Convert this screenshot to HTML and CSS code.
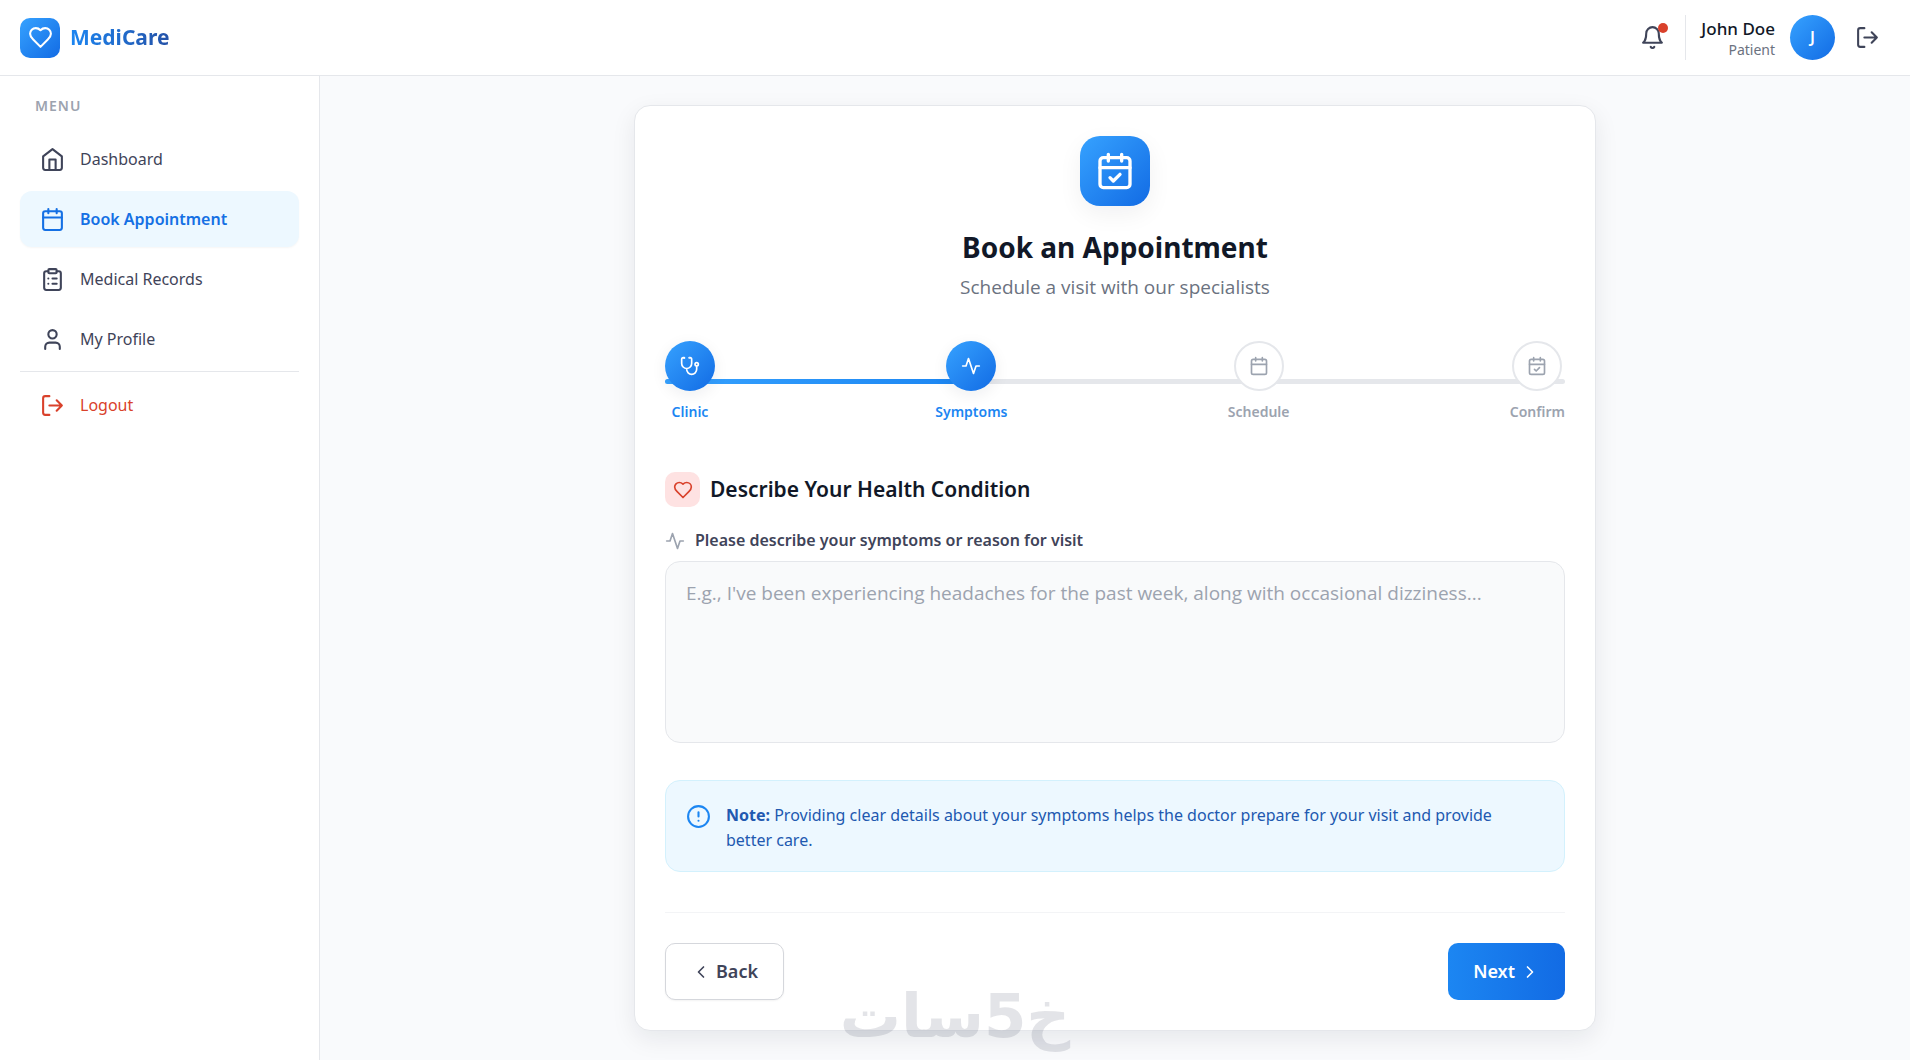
FILE: index.html
```html
<!DOCTYPE html>
<html lang="en">
<head>
<meta charset="utf-8">
<meta name="viewport" content="width=device-width, initial-scale=1">
<title>MediCare - Book an Appointment</title>
<link rel="stylesheet" href="styles.css">
</head>
<body>
<svg class="sprite" aria-hidden="true">
  <symbol id="heart" viewBox="0 0 24 24"><path d="M19 14c1.49-1.46 3-3.21 3-5.5A5.5 5.5 0 0 0 16.500 3c-1.760 0-3 .5-4.500 2-1.500-1.500-2.740-2-4.500-2A5.500 5.500 0 0 0 2 8.500c0 2.300 1.500 4.050 3 5.500l7 7Z"/></symbol>
  <symbol id="bell" viewBox="0 0 24 24"><path d="M6 8a6 6 0 0 1 12 0c0 7 3 9 3 9H3s3-2 3-9"/><path d="M10.300 21a1.940 1.940 0 0 0 3.400 0"/></symbol>
  <symbol id="logout" viewBox="0 0 24 24"><path d="M9 21H5a2 2 0 0 1-2-2V5a2 2 0 0 1 2-2h4M16 17l5-5-5-5M21 12H9"/></symbol>
  <symbol id="home" viewBox="0 0 24 24"><path d="m3 9 9-7 9 7v11a2 2 0 0 1-2 2H5a2 2 0 0 1-2-2zM9 22V12h6v10"/></symbol>
  <symbol id="calendar" viewBox="0 0 24 24"><rect x="3" y="4" width="18" height="18" rx="2"/><path d="M16 2v4M8 2v4M3 10h18"/></symbol>
  <symbol id="calendar-check" viewBox="0 0 24 24"><rect x="3" y="4" width="18" height="18" rx="2"/><path d="M16 2v4M8 2v4M3 10h18M9 16l2 2 4-4"/></symbol>
  <symbol id="clipboard" viewBox="0 0 24 24"><rect x="8" y="2" width="8" height="4" rx="1"/><path d="M16 4h2a2 2 0 0 1 2 2v14a2 2 0 0 1-2 2H6a2 2 0 0 1-2-2V6a2 2 0 0 1 2-2h2M12 11h4M12 16h4M8 11h.01M8 16h.01"/></symbol>
  <symbol id="user" viewBox="0 0 24 24"><path d="M19 21v-2a4 4 0 0 0-4-4H9a4 4 0 0 0-4 4v2"/><circle cx="12" cy="7" r="4"/></symbol>
  <symbol id="stethoscope" viewBox="0 0 24 24"><path d="M4.800 2.300A.3.3 0 1 0 5 2H4a2 2 0 0 0-2 2v5a6 6 0 0 0 12 0V4a2 2 0 0 0-2-2h-1a.2.2 0 1 0 .3.3M8 15v1a6 6 0 0 0 12 0v-4"/><circle cx="20" cy="10" r="2"/></symbol>
  <symbol id="activity" viewBox="0 0 24 24"><path d="M22 12h-4l-3 9L9 3l-3 9H2"/></symbol>
  <symbol id="alert" viewBox="0 0 24 24"><circle cx="12" cy="12" r="10"/><path d="M12 8v4M12 16h.01"/></symbol>
  <symbol id="left" viewBox="0 0 24 24"><path d="m15 18-6-6 6-6"/></symbol>
  <symbol id="right" viewBox="0 0 24 24"><path d="m9 18 6-6-6-6"/></symbol>
</svg>

<header class="topbar">
  <a class="brand" href="#">
    <span class="brand-mark"><svg class="icon"><use href="#heart"/></svg></span>
    <span class="brand-name">MediCare</span>
  </a>
  <div class="account">
    <button class="icon-button" type="button" aria-label="Notifications">
      <svg class="icon"><use href="#bell"/></svg>
      <span class="badge"></span>
    </button>
    <div class="profile">
      <div class="profile-text">
        <div class="profile-name">John Doe</div>
        <div class="profile-role">Patient</div>
      </div>
      <div class="avatar">J</div>
    </div>
    <button class="icon-button" type="button" aria-label="Log out"><svg class="icon"><use href="#logout"/></svg></button>
  </div>
</header>

<div class="layout">
  <aside class="sidebar">
    <h2 class="menu-title">MENU</h2>
    <nav class="nav">
      <a class="nav-item" href="#"><svg class="icon"><use href="#home"/></svg>Dashboard</a>
      <a class="nav-item active" href="#" aria-current="page"><svg class="icon"><use href="#calendar"/></svg>Book Appointment</a>
      <a class="nav-item" href="#"><svg class="icon"><use href="#clipboard"/></svg>Medical Records</a>
      <a class="nav-item" href="#"><svg class="icon"><use href="#user"/></svg>My Profile</a>
    </nav>
    <div class="nav-footer">
      <a class="nav-item danger" href="#"><svg class="icon"><use href="#logout"/></svg>Logout</a>
    </div>
  </aside>

  <main class="main">
    <form class="card">
      <div class="card-header">
        <span class="hero-mark"><svg class="icon"><use href="#calendar-check"/></svg></span>
        <h1 class="title">Book an Appointment</h1>
        <p class="subtitle">Schedule a visit with our specialists</p>
      </div>

      <div class="stepper">
        <div class="track"><div class="track-fill"></div></div>
        <ol class="steps">
          <li class="step done"><span class="step-dot"><svg class="icon small"><use href="#stethoscope"/></svg></span>Clinic</li>
          <li class="step done" aria-current="step"><span class="step-dot"><svg class="icon small"><use href="#activity"/></svg></span>Symptoms</li>
          <li class="step"><span class="step-dot"><svg class="icon small"><use href="#calendar"/></svg></span>Schedule</li>
          <li class="step"><span class="step-dot"><svg class="icon small"><use href="#calendar-check"/></svg></span>Confirm</li>
        </ol>
      </div>

      <h2 class="section-title"><span class="section-mark"><svg class="icon small"><use href="#heart"/></svg></span>Describe Your Health Condition</h2>
      <label class="field-label" for="symptoms"><svg class="icon small"><use href="#activity"/></svg>Please describe your symptoms or reason for visit</label>
      <textarea class="field" id="symptoms" placeholder="E.g., I've been experiencing headaches for the past week, along with occasional dizziness..."></textarea>

      <div class="note">
        <svg class="icon"><use href="#alert"/></svg>
        <p class="note-text"><strong>Note:</strong> Providing clear details about your symptoms helps the doctor prepare for your visit and provide better care.</p>
      </div>

      <div class="actions">
        <button class="button secondary" type="button"><svg class="icon small"><use href="#left"/></svg>Back</button>
        <button class="button primary" type="submit">Next<svg class="icon small"><use href="#right"/></svg></button>
      </div>
    </form>
  </main>
</div>
<div class="watermark" lang="ar" dir="rtl">خ5سات</div>
</body>
</html>
```
FILE: styles.css
```css
:root {
  --blue-gradient: linear-gradient(135deg, #36a2ff, #126be4);
  --blue: #1c86f2;
  --blue-dark: #1570e4;
  --gray-50: #f9fafb;
  --gray-100: #f3f4f6;
  --gray-200: #e5e7eb;
  --gray-400: #9ca3af;
  --gray-500: #6b7280;
  --gray-700: #3f4459;
  --gray-900: #111827;
  --red: #d9412b;
}

* { box-sizing: border-box; }

body {
  margin: 0;
  min-height: 100vh;
  display: flex;
  flex-direction: column;
  background: #f9fafc;
  color: var(--gray-900);
  font-family: "Noto Sans", "Open Sans", sans-serif;
  font-size: 16px;
  line-height: 25px;
}

h1, h2, p, ol { margin: 0; padding: 0; }
a { color: inherit; text-decoration: none; }
button { font: inherit; cursor: pointer; }

.sprite { display: none; }

.icon {
  width: 25px;
  height: 25px;
  flex: none;
  fill: none;
  stroke: currentColor;
  stroke-width: 2;
  stroke-linecap: round;
  stroke-linejoin: round;
}
.icon.small { width: 20px; height: 20px; }

/* Top bar */
.topbar {
  display: flex;
  align-items: center;
  justify-content: space-between;
  padding: 15px 20px;
  background: #fff;
  border-bottom: 1px solid var(--gray-200);
}
.brand { display: flex; align-items: center; gap: 10px; }
.brand-mark {
  display: grid;
  place-items: center;
  width: 40px;
  height: 40px;
  border-radius: 10px;
  background: var(--blue-gradient);
  color: #fff;
}
.brand-name {
  font-size: 21px;
  font-weight: 700;
  background: linear-gradient(90deg, #1c86f2, #2452a8);
  background-clip: text;
  color: transparent;
}
.account { display: flex; align-items: center; gap: 10px; }
.icon-button {
  position: relative;
  display: grid;
  place-items: center;
  width: 45px;
  height: 45px;
  padding: 0;
  border: 0;
  border-radius: 10px;
  background: none;
  color: var(--gray-700);
}
.badge {
  position: absolute;
  top: 8px;
  right: 7px;
  width: 10px;
  height: 10px;
  border-radius: 50%;
  background: var(--red);
}
.profile {
  display: flex;
  align-items: center;
  gap: 15px;
  height: 45px;
  padding-left: 15px;
  border-left: 1px solid var(--gray-200);
}
.profile-text { padding-top: 2px; text-align: right; }
.profile-name { font-size: 17px; font-weight: 500; line-height: 23px; }
.profile-role { color: var(--gray-500); font-size: 14px; line-height: 20px; }
.avatar {
  display: grid;
  place-items: center;
  width: 45px;
  height: 45px;
  border-radius: 50%;
  background: var(--blue-gradient);
  color: #fff;
  font-weight: 600;
}

/* Sidebar */
.layout { display: flex; flex: 1; }
.sidebar {
  flex: none;
  width: 320px;
  padding: 20px;
  background: #fff;
  border-right: 1px solid var(--gray-200);
}
.menu-title {
  padding: 0 15px;
  margin-bottom: 15px;
  color: var(--gray-400);
  font-size: 14px;
  font-weight: 600;
  letter-spacing: 1px;
  line-height: 20px;
}
.nav { display: grid; gap: 4px; }
.nav-item {
  display: flex;
  align-items: center;
  gap: 15px;
  height: 56px;
  padding: 0 20px;
  border-radius: 12px;
  color: var(--gray-700);
}
.nav-item.active {
  background: #edf8ff;
  color: var(--blue-dark);
  font-weight: 600;
  box-shadow: 0 1px 2px rgba(0, 0, 0, 0.04);
}
.nav-item.danger { color: var(--red); }
.nav-footer { margin-top: 4px; padding-top: 5px; border-top: 1px solid var(--gray-200); }

/* Booking card */
.main { flex: 1; min-width: 0; padding: 29px 30px; }
.card {
  max-width: 962px;
  margin: 0 auto;
  padding: 30px;
  background: #fff;
  border: 1px solid var(--gray-200);
  border-radius: 16px;
  box-shadow: 0 8px 24px rgba(17, 24, 39, 0.08);
}
.card-header { display: grid; justify-items: center; text-align: center; }
.hero-mark {
  display: grid;
  place-items: center;
  width: 70px;
  height: 70px;
  margin-bottom: 20px;
  border-radius: 20px;
  background: var(--blue-gradient);
  color: #fff;
  box-shadow: 0 8px 24px rgba(17, 24, 39, 0.06);
}
.hero-mark .icon { width: 40px; height: 40px; }
.title { font-size: 28px; font-weight: 700; line-height: 42px; }
.subtitle {
  color: var(--gray-500);
  font-family: "Open Sans", "Noto Sans", sans-serif;
  font-size: 19px;
  line-height: 38px;
}

.stepper { position: relative; margin: 35px 0 49px; }
.track {
  position: absolute;
  top: 38px;
  left: 0;
  right: 0;
  height: 5px;
  border-radius: 5px;
  background: var(--gray-200);
}
.track-fill {
  width: 33%;
  height: 100%;
  border-radius: inherit;
  background: linear-gradient(90deg, #36a2ff, var(--blue));
}
.steps { position: relative; display: flex; justify-content: space-between; list-style: none; }
.step {
  display: grid;
  justify-items: center;
  gap: 10px;
  color: var(--gray-400);
  font-size: 14px;
  font-weight: 600;
  line-height: 22px;
}
.step-dot {
  display: grid;
  place-items: center;
  width: 50px;
  height: 50px;
  border: 2px solid var(--gray-200);
  border-radius: 50%;
  background: #fff;
}
.step.done { color: var(--blue); }
.step.done .step-dot {
  border: 0;
  background: var(--blue-gradient);
  color: #fff;
  box-shadow: 0 4px 16px rgba(17, 24, 39, 0.07);
}

.section-title {
  display: flex;
  align-items: center;
  gap: 10px;
  margin-bottom: 21px;
  font-size: 21px;
  font-weight: 600;
}
.section-mark {
  display: grid;
  place-items: center;
  width: 35px;
  height: 35px;
  border-radius: 10px;
  background: #fee2e2;
  color: var(--red);
}
.field-label {
  display: flex;
  align-items: center;
  gap: 10px;
  margin-bottom: 8px;
  color: var(--gray-700);
  font-weight: 600;
}
.field-label .icon { color: var(--gray-400); }
.field {
  display: block;
  width: 100%;
  height: 182px;
  padding: 16px 20px;
  border: 1px solid var(--gray-200);
  border-radius: 15px;
  background: var(--gray-50);
  color: inherit;
  font-family: "Open Sans", "Noto Sans", sans-serif;
  font-size: 19px;
  line-height: 30px;
  resize: none;
}
.field::placeholder { color: var(--gray-400); opacity: 1; }

.note {
  display: flex;
  gap: 15px;
  margin-top: 37px;
  padding: 22px 45px 18px 20px;
  border: 1px solid #d3f1fd;
  border-radius: 15px;
  background: #edf8ff;
  color: #2159b0;
}
.note .icon { margin-top: 1px; color: var(--blue); }
.note strong { font-weight: 700; }

.actions {
  display: flex;
  justify-content: space-between;
  margin-top: 40px;
  padding-top: 30px;
  border-top: 1px solid var(--gray-100);
}
.button {
  display: flex;
  align-items: center;
  gap: 5px;
  height: 57px;
  padding: 0 25px;
  border-radius: 10px;
  font-size: 18px;
  font-weight: 600;
}
.button.secondary {
  border: 1px solid #d5d7dc;
  background: #fff;
  color: var(--gray-700);
  box-shadow: 0 1px 2px rgba(0, 0, 0, 0.05);
}
.button.primary {
  border: 0;
  background: linear-gradient(90deg, #1c86f2, #126be4);
  color: #fff;
}

.watermark {
  position: fixed;
  right: 0;
  bottom: 12px;
  left: 0;
  color: #1e2341;
  font-family: "DejaVu Sans", sans-serif;
  font-size: 61px;
  font-weight: 700;
  line-height: 64px;
  text-align: center;
  opacity: 0.12;
  pointer-events: none;
}
```
